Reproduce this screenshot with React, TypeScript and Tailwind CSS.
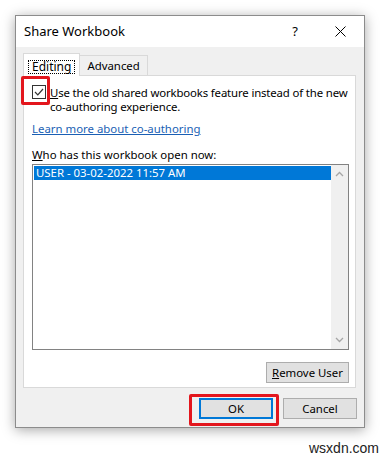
import React from "react";

const ui = { fontFamily: '"Noto Sans", "Open Sans", sans-serif' };

function Checkbox() {
  return (
    <div className="w-[14px] h-[14px] border border-[#333] bg-white flex items-center justify-center shrink-0">
      <svg width="12" height="12" viewBox="0 0 12 12">
        <path d="M2 6 L4.8 8.8 L10 3" fill="none" stroke="#333" strokeWidth="1.2" />
      </svg>
    </div>
  );
}

export default function App() {
  return (
    <div className="w-[382px] h-[457px] bg-white relative overflow-hidden text-[11.4px] text-black" style={ui}>
      <div className="pt-[15px] pl-[15px]">
        <div className="w-[350px] h-[413px] border border-[#8c8c8c] bg-[#f0f0f0] shadow-[0_2px_12px_rgba(0,0,0,0.35)] flex flex-col">
          {/* title bar */}
          <div className="h-[31px] bg-white flex items-center pl-[8px] shrink-0">
            <span className="flex-1 text-[13px]">Share Workbook</span>
            <span className="w-[46px] text-center text-[13px]">?</span>
            <div className="w-[46px] flex justify-center pr-[1px]">
              <svg width="11" height="11" viewBox="0 0 11 11">
                <path d="M0.5 0.5 L10.5 10.5 M10.5 0.5 L0.5 10.5" stroke="#000" strokeWidth="1" />
              </svg>
            </div>
          </div>

          <div className="pt-[6px] pl-[7px] pr-[8px] flex flex-col">
            {/* tabs */}
            <div className="flex h-[22px] items-end">
              <div className="h-[23px] pl-[4px] pr-[4px] pt-[4px] border border-b-0 border-[#d9d9d9] bg-white relative z-10 mb-[-1px] text-[12px]">
                <span className="px-[3px] border border-dotted border-black leading-[12px] inline-block">Editing</span>
              </div>
              <div className="h-[20px] px-[7px] border border-b-0 border-l-0 border-[#d9d9d9] bg-[#f0f0f0] leading-[19px]">
                Advanced
              </div>
            </div>

            {/* panel */}
            <div className="h-[313px] border border-[#d9d9d9] bg-white pl-[8px] pr-[6px] pt-[9px] flex flex-col">
              <div className="flex items-start gap-[4px]">
                <Checkbox />
                <div className="leading-[14px] mt-[1px] whitespace-nowrap tracking-[-0.15px]">
                  <div>
                    <span className="underline">U</span>se the old shared workbooks feature instead of the new
                  </div>
                  <div>co-authoring experience.</div>
                </div>
              </div>

              <div className="mt-[8px] text-[#1a5fb4] underline leading-[14px]">Learn more about co-authoring</div>

              <div className="mt-[12px] leading-[14px]">
                <span className="underline">W</span>ho has this workbook open now:
              </div>

              <div className="mt-[2px] h-[186px] border border-[#828282] flex">
                <div className="flex-1 pt-[1px] pl-[1px]">
                  <div className="h-[14px] bg-[#0078d7] text-white leading-[14px] pl-[2px]">USER - 03-02-2022 11:57 AM</div>
                </div>
                <div className="w-[17px] bg-[#f0f0f0] flex flex-col items-center justify-between py-[6px]">
                  <svg width="9" height="6" viewBox="0 0 9 6">
                    <path d="M1 5 L4.5 1.5 L8 5" fill="none" stroke="#a6a6a6" strokeWidth="1.3" />
                  </svg>
                  <svg width="9" height="6" viewBox="0 0 9 6">
                    <path d="M1 1 L4.5 4.5 L8 1" fill="none" stroke="#a6a6a6" strokeWidth="1.3" />
                  </svg>
                </div>
              </div>

              <div className="flex justify-end mt-[12px]">
                <div className="w-[83px] h-[21px] border border-[#adadad] bg-[#e1e1e1] flex items-center justify-center">
                  <span><span className="underline">R</span>emove User</span>
                </div>
              </div>
            </div>

            {/* buttons */}
            <div className="flex justify-end gap-[10px] mt-[10px] mr-[-1px]">
              <div className="w-[74px] h-[21px] border-2 border-[#0078d7] bg-[#e1e1e1] flex items-center justify-center">OK</div>
              <div className="w-[74px] h-[21px] border border-[#adadad] bg-[#e1e1e1] flex items-center justify-center">Cancel</div>
            </div>
          </div>
        </div>
      </div>

      {/* red highlight boxes */}
      <div className="absolute left-[21px] top-[76px] w-[29px] h-[29px] border-[3px] border-[#e3161d] rounded-[2px]" />
      <div className="absolute left-[189px] top-[394px] w-[90px] h-[32px] border-[3px] border-[#e3161d] rounded-[2px]" />

      <div className="absolute left-[309px] top-[438px] text-[14px] text-[#222]" style={{ fontFamily: '"Liberation Sans", sans-serif' }}>
        wsxdn.com
      </div>
    </div>
  );
}
